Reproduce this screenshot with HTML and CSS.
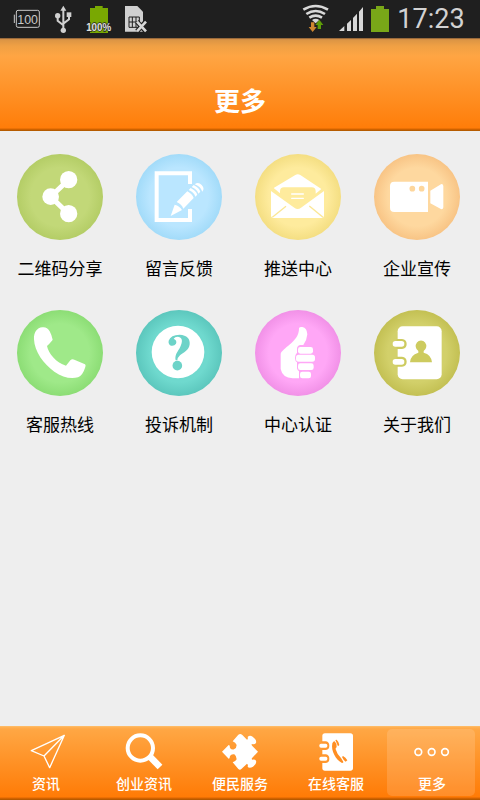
FILE: index.html
```html
<!DOCTYPE html>
<html lang="zh-CN">
<head>
<meta charset="utf-8">
<title>更多</title>
<link rel="stylesheet" href="styles.css">
</head>
<body>
<div class="screen">
  <div class="status">
    <svg class="status-left" viewBox="0 0 480 114" width="160" height="38">
      <rect x="49" y="31" width="69" height="51" rx="5" fill="none" stroke="#c8c8c8" stroke-width="3"/>
      <path d="M43 44v25" stroke="#c8c8c8" stroke-width="3"/>
      <text x="83" y="73" class="t-100" text-anchor="middle" textLength="62" lengthAdjust="spacingAndGlyphs">100</text>
      <g fill="none" stroke="#d0d0d0" stroke-width="6"><path d="M190 90V28M190 76L173 62V48M190 71L207 58V44"/></g>
      <g fill="#d0d0d0"><path d="M190 17l9 15h-18z"/><circle cx="190" cy="91" r="8"/><circle cx="173" cy="47" r="8"/><rect x="200" y="37" width="14" height="14"/></g>
      <path d="M270 24h15v-6h23v6h16v75h-54z" fill="#79a802"/>
      <text x="296" y="92" class="t-pct" text-anchor="middle" textLength="75" lengthAdjust="spacingAndGlyphs">100%</text>
      <path d="M375 18h37l17 17v60h-54z" fill="#d0d0d0"/>
      <path d="M387 51h31v31h-31zM387 66h31M397 51v31M408 51v31" fill="none" stroke="#1f1f1f" stroke-width="3"/>
      <path d="M411 65l26 29M437 65l-26 29" stroke="#1f1f1f" stroke-width="14"/>
      <path d="M411 65l27 29M438 65l-27 29" stroke="#d8d8d8" stroke-width="8"/>
    </svg>
    <svg class="status-right" viewBox="180 0 280 114" width="93.333" height="38">
      <g fill="none" stroke="#d8d8d8" stroke-width="8"><path d="M190 29Q227 7 264 29M199 42Q227 24 255 42M208 53Q227 41 246 53"/></g>
      <path d="M216 60Q227 52 238 60L227 70z" fill="#d8d8d8"/>
      <path d="M213 67h10v14h7l-12 15-12-15h7z" fill="#cf8730"/>
      <path d="M233 87v-12h-7l12-16 12 16h-7v12z" fill="#5d9c08"/>
      <path d="M297 93l16-15v15zM321 93V71l12-11v33zM339 93V54l12-13v52zM357 93V35l12-14v72z" fill="#d8d8d8"/>
      <path d="M393 27h15v-9h24v9h15v69h-54z" fill="#79a718"/>
    </svg>
    <span class="clock">17:23</span>
  </div>
  <header class="header"><h1>更多</h1></header>
  <main class="grid">
    <a class="tile"><span class="disc share"><svg viewBox="51 42 258 258"><path d="M206 119L152 170L206 222" fill="none" stroke="#fff" stroke-width="15"/><g fill="#fff"><circle cx="206" cy="119" r="26"/><circle cx="152" cy="170" r="25"/><circle cx="206" cy="221" r="26"/></g></svg></span><span class="label">二维码分享</span></a>
    <a class="tile"><span class="disc note"><svg viewBox="408 42 258 258"><path d="M570 132V100H470V240H570V207" fill="none" stroke="#fff" stroke-width="12"/><g fill="#fff"><path d="M512 228L524 194Q539 198 546 210zM530 186L562 154Q577 162 581 174L550 206Q545 193 530 186zM566 150l6-6q16 8 20 20l-6 6q-4-13-20-20zM575 141l6-6q16 8 20 20l-6 6q-4-13-20-20zM584 133q11-9 21 2q10 10 2 20q-6-16-23-22z"/></g></svg></span><span class="label">留言反馈</span></a>
    <a class="tile"><span class="disc mail"><svg viewBox="45 42 258 258"><g fill="#fff"><path d="M101 144L166 105Q173 100 181 105L244 147L227 161V154Q227 142 215 142H132Q120 142 120 154V160z"/><path d="M93 153L163 203Q173 211 183 203L252 153V226Q252 234 244 234H101Q93 234 93 226z"/></g><path d="M155 162H190M155 175H190" stroke="#fff" stroke-width="4" stroke-linecap="round"/><path d="M97 232L138 199M249 232L208 198" stroke="#fbe795" stroke-width="4"/></svg></span><span class="label">推送中心</span></a>
    <a class="tile"><span class="disc video"><svg viewBox="402 42 258 258"><path d="M463 125H564V216H463Q450 216 450 203V138Q450 125 463 125zM571 152L604 132Q610 132 610 138V202Q610 208 604 208L571 190z" fill="#fff"/><circle cx="517" cy="146" r="8.500" fill="#fdd69c"/><circle cx="545" cy="146" r="8.500" fill="#fdd69c"/></svg></span><span class="label">企业宣传</span></a>
    <a class="tile"><span class="disc phone"><svg viewBox="51 30 258 258"><path d="M102 118C101 98 111 83 127 82Q141 80 149 94Q155 105 158 119Q157 122 141 138C145 160 169 189 198 197L211 181Q216 176 223 179L255 193Q258 195 256 201Q248 227 234 232C212 238 187 232 163 215C131 193 103 154 102 118z" fill="#fff"/></svg></span><span class="label">客服热线</span></a>
    <a class="tile"><span class="disc help"><svg viewBox="408 30 258 258"><circle cx="534" cy="156" r="79" fill="#fff"/><path d="M527 181C524 166 531 157 538 146C546 132 551 115 537 111Q526 109 521 116Q532 121 528 131Q523 139 513 137Q504 133 506 122Q512 104 539 104C561 105 571 117 569 133C567 152 550 158 540 166Q533 172 532 181z" fill="#6dd3c8"/><circle cx="532" cy="197" r="14.500" fill="#6dd3c8"/></svg></span><span class="label">投诉机制</span></a>
    <a class="tile"><span class="disc thumb"><svg viewBox="45 30 258 258"><path d="M177 85Q178 80 187 81Q201 84 202 103Q201 119 190 135H182Q171 136 171 147V158Q164 165 165 174Q165 183 171 187V205Q172 211 177 214V235H158Q127 233 122 207V164C123 144 178 128 177 85z" fill="#fff"/><g fill="#fff"><rect x="174" y="141" width="45" height="20" rx="7"/><rect x="168" y="164" width="57" height="21" rx="8"/><rect x="174" y="190" width="47" height="20" rx="7"/><rect x="180" y="215" width="33" height="20" rx="7"/></g></svg></span><span class="label">中心认证</span></a>
    <a class="tile"><span class="disc about"><svg viewBox="402 30 258 258"><rect x="473" y="79" width="132" height="159" rx="15" fill="#fff"/><path d="M470 117h16q14 2 14 15t-14 15h-16zM470 170h16q14 2 14 15t-14 15h-16z" fill="#cdcb5f"/><rect x="458" y="123" width="35" height="17" rx="8" fill="#fff"/><rect x="458" y="177" width="35" height="17" rx="8" fill="#fff"/><path d="M510 187Q511 165 535 158V153A16 17 0 1 1 551 153V158Q574 164 576 187z" fill="#cdcb5f"/></svg></span><span class="label">关于我们</span></a>
  </main>
  <nav class="tabs">
    <a class="tab first"><svg viewBox="78 30 120 132"><path d="M193 46L94 92L132 108L149 143zM132 108L193 46" fill="none" stroke="#fff" stroke-width="4" stroke-linejoin="round"/></svg><span>资讯</span></a>
    <a class="tab"><svg viewBox="372 30 120 132"><circle cx="421" cy="84" r="38" fill="none" stroke="#fff" stroke-width="12"/><path d="M448 108L480 141" stroke="#fff" stroke-width="20"/></svg><span>创业资讯</span></a>
    <a class="tab"><svg viewBox="15 6 120 132"><path d="M21 71L41 51Q45 50 45 60Q50 66 57 64Q65 60 65 51Q62 43 53 40L70 20Q76 16 82 21L96 35Q100 34 98 27Q104 20 113 26Q126 36 123 45Q119 50 111 48Q108 50 112 54L129 71L112 89Q108 93 112 95Q119 93 123 98Q126 107 114 116Q104 122 98 117Q100 109 96 107L80 122Q75 128 70 123L53 103Q62 100 65 94Q65 84 58 79Q49 77 45 84Q44 94 41 92z" fill="#fff"/></svg><span>便民服务</span></a>
    <a class="tab"><svg viewBox="228 30 120 132"><rect x="247" y="40" width="92" height="112" rx="8" fill="#fff"/><path d="M245 64h13q10 2 10 13t-10 13h-13zM245 103h13q10 2 10 13t-10 13h-13z" fill="#ff982f"/><rect x="238" y="71" width="24" height="12" rx="5" fill="#fff"/><rect x="238" y="110" width="24" height="12" rx="5" fill="#fff"/><path d="M277 70Q279 64 284 64Q290 69 290 82Q286 84 287 88Q291 103 303 114L309 124Q312 129 306 129C288 120 272 93 277 70zM286 60l4-1q8 8 8 16l-4 4zM309 108q8 4 13 13l-5 4q-6-3-11-14z" fill="#ff8e22"/></svg><span>在线客服</span></a>
    <a class="tab active"><svg viewBox="516 30 120 132"><g fill="none" stroke="#fff" stroke-width="5"><circle cx="535" cy="96" r="10"/><circle cx="575" cy="96" r="10"/><circle cx="615" cy="96" r="10"/></g></svg><span>更多</span></a>
  </nav>
</div>
</body>
</html>
```
FILE: styles.css
```css
* { box-sizing: border-box; }
body { margin: 0; font-family: "Noto Sans CJK SC", sans-serif; }
.screen { width: 480px; height: 800px; display: flex; flex-direction: column; background: #eee; overflow: hidden; }
.status { height: 38px; flex: none; display: flex; background: #1f1f1f; }
.status svg { display: block; flex: none; }
.status-right { margin-left: 140px; }
.t-100 { font: 38px "Liberation Sans", sans-serif; fill: #c8c8c8; }
.t-pct { font: bold 30px "Liberation Sans", sans-serif; fill: #e0e0e0; stroke: #1f1f1f; stroke-width: 4px; paint-order: stroke; }
.clock { margin-left: 4px; font: 27px/38px Roboto, sans-serif; color: #d2d2d2; white-space: nowrap; }
.header { height: 93px; flex: none; padding-top: 44px; background: linear-gradient(#6b4a2b 0, #c98a4b 1px, #dc9544 2px, #f0a044 8px, #ffa543 18px, #ff7d09 90px, #d96500 91px, #aa5800 93px); }
.header h1 { margin: 0; text-align: center; font-size: 26px; line-height: 36px; font-weight: 700; color: #fff; }
.grid { flex: 1; display: grid; grid-template-columns: repeat(4, 86px); grid-auto-rows: 156px; column-gap: 33px; padding: 23px 17px 0; }
.tile { display: flex; flex-direction: column; align-items: center; }
.disc { width: 86px; height: 86px; border-radius: 50%; }
.disc svg { display: block; width: 86px; height: 86px; }
.share { background: radial-gradient(closest-side, #c2d878 68%, #b4cd66); }
.note { background: radial-gradient(closest-side, #bae6ff 68%, #a2dbf9); }
.mail { background: radial-gradient(closest-side, #feeb9d 68%, #f4de82); }
.video { background: radial-gradient(closest-side, #fed89f 68%, #f8c485); }
.phone { background: radial-gradient(closest-side, #9fe989 68%, #8cdd75); }
.help { background: radial-gradient(closest-side, #6fd9ce 68%, #5cc7bd); }
.thumb { background: radial-gradient(closest-side, #ffa7f6 68%, #f191e7); }
.about { background: radial-gradient(closest-side, #d2d06a 68%, #c3c053); }
.label { margin-top: 15px; font-size: 17px; line-height: 25px; color: #000; white-space: nowrap; }
.tabs { height: 74px; flex: none; display: grid; grid-template-columns: repeat(5, 96px); background: linear-gradient(#ffc16f 0, #ffb255 1px, #ffa744 3px, #ff7b06 71px, #dc6500 72px, #aa5600 74px); }
.tab { display: flex; flex-direction: column; align-items: center; padding-top: 4px; color: #fff; font-size: 14px; font-weight: 500; }
.tab svg { display: block; width: 40px; height: 44px; }
.tab span { line-height: 20px; margin-top: -1px; }
.first { padding-right: 4px; }
.active { margin: 3px 5px 4px 3px; padding: 1px 0 0 2px; border-radius: 5px; background: rgba(255, 255, 255, .14); }
```
